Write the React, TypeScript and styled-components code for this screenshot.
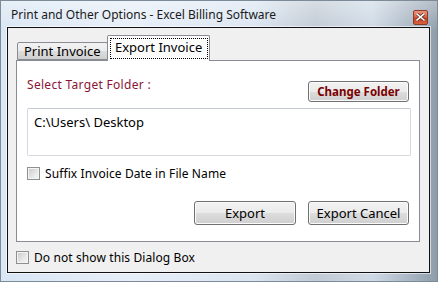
import React from 'react';
import styled, { createGlobalStyle } from 'styled-components';

const Global = createGlobalStyle`
  html, body { margin: 0; padding: 0; background: #ffffff; }
  body { font-family: "Noto Sans", "Open Sans", sans-serif; }
  * { box-sizing: border-box; }
`;

const Window = styled.div`
  width: 438px;
  height: 282px;
  border: 1px solid #7d8b99;
  background:
    linear-gradient(180deg, rgba(255,255,255,0.35) 0%, rgba(255,255,255,0) 30px),
    linear-gradient(90deg, #d9e6f4 0%, #e6eef8 30%, #dae5f1 58%, #c0cad4 72%, #cfdae6 85%, #8f9dab 100%);
  display: flex;
  flex-direction: column;
  padding: 0 7px 8px 6px;
`;

const TitleBar = styled.div`
  height: 26px;
  display: flex;
  align-items: center;
  justify-content: space-between;
  padding: 0 2px 0 4px;
`;

const Title = styled.span`
  font-size: 12px;
  color: #1a1a1a;
  line-height: 16px;
  margin-top: 1px;
`;

const CloseButton = styled.div`
  width: 15px;
  height: 15px;
  margin-top: 6px;
  border: 1px solid #8a3b2a;
  border-radius: 2px;
  background: linear-gradient(180deg, #eb9479 0%, #dc6446 45%, #c83c20 55%, #d4623f 100%);
  display: flex;
  align-items: center;
  justify-content: center;
`;

const Client = styled.div`
  flex: 1;
  border: 1px solid #101010;
  box-shadow: 0 0 0 1px rgba(255,255,255,0.6);
  background: #f0f0f0;
  padding: 7px 0 0 0;
  display: flex;
  flex-direction: column;
`;

const TabStrip = styled.div`
  display: flex;
  align-items: flex-end;
  height: 25px;
  padding-left: 9px;
  position: relative;
  z-index: 1;
`;

const Tab = styled.div<{ $active?: boolean }>`
  font-size: 13px;
  line-height: 15px;
  color: #000;
  white-space: nowrap;
  border: 1px solid #898c95;
  border-bottom: ${p => (p.$active ? 'none' : '1px solid #898c95')};
  border-radius: 2px 2px 0 0;
  height: ${p => (p.$active ? '26px' : '18px')};
  margin-bottom: ${p => (p.$active ? '-1px' : '0')};
  width: ${p => (p.$active ? '103px' : '91px')};
  margin-left: ${p => (p.$active ? '-1px' : '0')};
  padding: ${p => (p.$active ? '2px 1px 0 2px' : '1px 0 0 6px')};
  background: ${p =>
    p.$active ? '#fcfcfc' : 'linear-gradient(180deg, #f2f2f2 0%, #ebebeb 50%, #dddddd 51%, #cfcfcf 100%)'};
`;

const Focus = styled.div`
  border: 1px dotted #000;
  height: 21px;
  padding: 1px 0 0 4px;
`;

const Panel = styled.div`
  margin: 0 9px 0 8px;
  height: 182px;
  border: 1px solid #898c95;
  background: #ffffff;
  padding: 16px 10px 0 10px;
  display: flex;
  flex-direction: column;
`;

const HeaderRow = styled.div`
  display: flex;
  justify-content: space-between;
  align-items: flex-start;
`;

const Label = styled.span`
  font-size: 12px;
  line-height: 15px;
  color: #8a1435;
  letter-spacing: 0.3px;
`;

const Button = styled.button<{ $bold?: boolean; $w?: number }>`
  font-family: "Noto Sans", "Open Sans", sans-serif;
  width: ${p => p.$w ?? 101}px;
  height: ${p => (p.$bold ? 21 : 24)}px;
  margin-top: ${p => (p.$bold ? 4 : 0)}px;
  border: 1px solid #707070;
  border-radius: 3px;
  background: linear-gradient(180deg, #f2f2f2 0%, #ebebeb 50%, #dddddd 51%, #cfcfcf 100%);
  box-shadow: inset 0 0 0 1px #fbfbfb;
  font-size: ${p => (p.$bold ? 11.5 : 13)}px;
  font-weight: ${p => (p.$bold ? 700 : 400)};
  color: ${p => (p.$bold ? '#7a0000' : '#000')};
  padding: 0;
  line-height: 16px;
`;

const PathBox = styled.div`
  margin-top: 6px;
  height: 48px;
  width: 384px;
  border: 1px solid #d5d9de;
  border-top-color: #c5cad0;
  border-radius: 2px;
  background: #fff;
  font-size: 13px;
  line-height: 18px;
  padding: 4px 0 0 6px;
  color: #000;
`;

const CheckRow = styled.label<{ $top?: number }>`
  display: flex;
  align-items: center;
  gap: 5px;
  margin-top: ${p => p.$top ?? 0}px;
  font-size: 12px;
  line-height: 15px;
  color: #000;
  letter-spacing: 0.1px;
`;

const CheckBox = styled.span`
  width: 13px;
  height: 13px;
  border: 1px solid #8e8f8f;
  background: linear-gradient(135deg, #c9c9c9 0%, #e8e8e8 60%, #f6f6f6 100%);
  box-shadow: inset 0 0 0 1px #f4f4f4;
  flex: none;
`;

const ButtonRow = styled.div`
  display: flex;
  justify-content: flex-end;
  gap: 12px;
  margin-top: 20px;
`;

const Footer = styled.div`
  padding: 8px 0 0 8px;
`;

export default function App() {
  return (
    <>
      <Global />
      <Window>
        <TitleBar>
          <Title>Print and Other Options - Excel Billing Software</Title>
          <CloseButton>
            <svg width="9" height="8" viewBox="0 0 9 8">
              <path d="M1 1 L8 7 M8 1 L1 7" stroke="#5a2a20" strokeWidth="3" strokeLinecap="square" />
              <path d="M1 1 L8 7 M8 1 L1 7" stroke="#ffffff" strokeWidth="1.6" strokeLinecap="square" />
            </svg>
          </CloseButton>
        </TitleBar>
        <Client>
          <TabStrip>
            <Tab>Print Invoice</Tab>
            <Tab $active>
              <Focus>Export Invoice</Focus>
            </Tab>
          </TabStrip>
          <Panel>
            <HeaderRow>
              <Label>Select Target Folder :</Label>
              <Button $bold>Change Folder</Button>
            </HeaderRow>
            <PathBox>C:\Users\ Desktop</PathBox>
            <CheckRow $top={10}>
              <CheckBox />
              Suffix Invoice Date in File Name
            </CheckRow>
            <ButtonRow>
              <Button $w={102}>Export</Button>
              <Button>Export Cancel</Button>
            </ButtonRow>
          </Panel>
          <Footer>
            <CheckRow>
              <CheckBox />
              Do not show this Dialog Box
            </CheckRow>
          </Footer>
        </Client>
      </Window>
    </>
  );
}
